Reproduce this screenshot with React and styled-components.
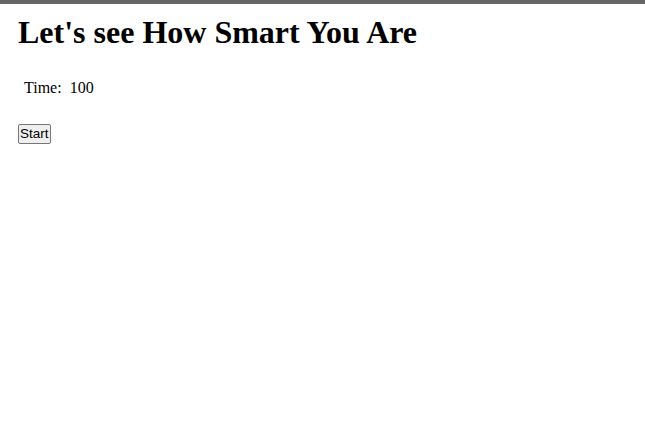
import React from "react";
import styled, { createGlobalStyle } from "styled-components";

const Global = createGlobalStyle`
  html, body { margin: 0; padding: 0; background: #fff; }
  body { font-family: "Liberation Serif", "Times New Roman", serif; color: #000; }
`;

const TopBar = styled.div`
  height: 4px;
  background: #666666;
`;

const Page = styled.div`
  padding: 0 18px;
`;

const Title = styled.h1`
  font-size: 32px;
  font-weight: bold;
  margin: 10px 0 0;
  line-height: 37px;
`;

const TimeRow = styled.div`
  display: flex;
  gap: 8px;
  padding-left: 6px;
  margin-top: 28px;
  font-size: 16px;
  line-height: 18px;
`;

const StartButton = styled.button`
  margin-top: 27px;
  font-family: Arial, "Liberation Sans", sans-serif;
  font-size: 13.5px;
  line-height: 15px;
  padding: 1px 1px 2px;
  border: 1px solid #767676;
  border-radius: 2px;
  background: #efefef;
  color: #000;
`;

export default function App() {
  return (
    <>
      <Global />
      <TopBar />
      <Page>
        <Title>Let's see How Smart You Are</Title>
        <TimeRow>
          <span>Time:</span>
          <span>100</span>
        </TimeRow>
        <StartButton>Start</StartButton>
      </Page>
    </>
  );
}
